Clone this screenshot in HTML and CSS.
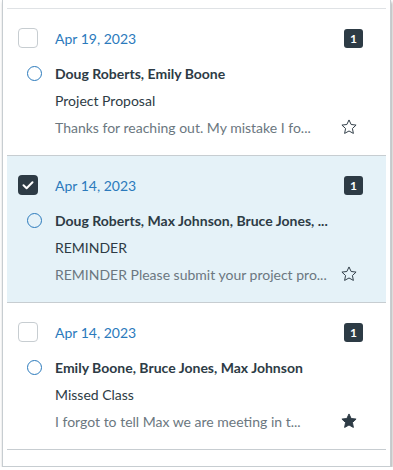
FILE: index.html
```html
<!DOCTYPE html>
<html lang="en">
<head>
    <meta charset="UTF-8">
    <meta name="viewport" content="width=device-width, initial-scale=1.0">
    <title>Inbox</title>
    <link rel="stylesheet" href="styles.css">
</head>
<body>
    <div class="frame">
        <ul class="conversations">
            <li class="conversation">
                <div class="row">
                    <span class="lead"><span class="checkbox"></span></span>
                    <span class="date">Apr 19, 2023</span>
                    <span class="badge">1</span>
                </div>
                <div class="row names-row">
                    <span class="lead"><span class="unread"></span></span>
                    <span class="names">Doug Roberts, Emily Boone</span>
                </div>
                <div class="row">
                    <span class="lead"></span>
                    <span class="subject">Project Proposal</span>
                </div>
                <div class="row">
                    <span class="lead"></span>
                    <span class="preview">Thanks for reaching out. My mistake I fo...</span>
                    <svg class="star" viewBox="0 0 24 24"><path d="M12 2.6l2.85 6.05 6.6.8-4.88 4.55 1.27 6.55L12 17.3l-5.84 3.25 1.27-6.55L2.55 9.45l6.6-.8z"/></svg>
                </div>
            </li>
            <li class="conversation selected">
                <div class="row">
                    <span class="lead">
                        <span class="checkbox checked">
                            <svg viewBox="0 0 20 20"><polyline points="5.5,10.3 8.6,13.2 14.5,7.2"/></svg>
                        </span>
                    </span>
                    <span class="date">Apr 14, 2023</span>
                    <span class="badge">1</span>
                </div>
                <div class="row names-row">
                    <span class="lead"><span class="unread"></span></span>
                    <span class="names">Doug Roberts, Max Johnson, Bruce Jones, ...</span>
                </div>
                <div class="row">
                    <span class="lead"></span>
                    <span class="subject">REMINDER</span>
                </div>
                <div class="row">
                    <span class="lead"></span>
                    <span class="preview">REMINDER Please submit your project pro...</span>
                    <svg class="star" viewBox="0 0 24 24"><path d="M12 2.6l2.85 6.05 6.6.8-4.88 4.55 1.27 6.55L12 17.3l-5.84 3.25 1.27-6.55L2.55 9.45l6.6-.8z"/></svg>
                </div>
            </li>
            <li class="conversation">
                <div class="row">
                    <span class="lead"><span class="checkbox"></span></span>
                    <span class="date">Apr 14, 2023</span>
                    <span class="badge">1</span>
                </div>
                <div class="row names-row">
                    <span class="lead"><span class="unread"></span></span>
                    <span class="names">Emily Boone, Bruce Jones, Max Johnson</span>
                </div>
                <div class="row">
                    <span class="lead"></span>
                    <span class="subject">Missed Class</span>
                </div>
                <div class="row">
                    <span class="lead"></span>
                    <span class="preview">I forgot to tell Max we are meeting in t...</span>
                    <svg class="star starred" viewBox="0 0 24 24"><path d="M12 2.6l2.85 6.05 6.6.8-4.88 4.55 1.27 6.55L12 17.3l-5.84 3.25 1.27-6.55L2.55 9.45l6.6-.8z"/></svg>
                </div>
            </li>
        </ul>
    </div>
</body>
</html>
```

FILE: styles.css
```css
body {
    margin: 0;
    font-family: Lato, 'Noto Sans', sans-serif;
    background-color: #fff;
    color: #2d3b45;
}
.frame {
    margin-left: 2px;
    width: 379px;
    padding: 8px 4px 16px 4px;
    border: 1px solid #c7cdd1;
    border-top: none;
    box-shadow: 1px 2px 3px rgba(0, 0, 0, 0.35);
}
.conversations {
    list-style: none;
    margin: 0;
    padding: 0;
    border-top: 1px solid #dfe2e5;
}
.conversation {
    height: 147px;
    box-sizing: border-box;
    padding: 19px 23px 0 11px;
    border-bottom: 1px solid #c7cdd1;
}
.conversation.selected {
    background-color: #e5f2f8;
}
.row {
    display: flex;
    align-items: center;
    height: 20px;
    margin-top: 7px;
}
.row:first-child {
    margin-top: 0;
}
.names-row {
    margin-top: 15px;
}
.lead {
    width: 37px;
    flex-shrink: 0;
    display: flex;
    align-items: center;
}
.checkbox {
    width: 18px;
    height: 18px;
    border: 1px solid #c7cdd1;
    border-radius: 4px;
    background-color: #fff;
    display: flex;
}
.checkbox.checked {
    width: 20px;
    height: 20px;
    border: none;
    background-color: #2d3b45;
}
.checkbox svg {
    width: 20px;
    height: 20px;
    fill: none;
    stroke: #fff;
    stroke-width: 2;
    stroke-linecap: round;
    stroke-linejoin: round;
}
.unread {
    width: 13px;
    height: 13px;
    margin-left: 8.5px;
    border: 1.5px solid #2b7abc;
    border-radius: 50%;
}
.date {
    flex: 1;
    font-size: 14px;
    color: #2b7abc;
}
.badge {
    width: 19px;
    height: 19px;
    border-radius: 3px;
    background-color: #2d3b45;
    color: #fff;
    font-size: 12px;
    font-weight: bold;
    display: flex;
    align-items: center;
    justify-content: center;
}
.names {
    font-size: 14px;
    font-weight: bold;
    white-space: nowrap;
}
.subject {
    font-size: 14px;
    white-space: nowrap;
}
.preview {
    flex: 1;
    font-size: 14px;
    color: #6b7780;
    white-space: nowrap;
}
.star {
    width: 18px;
    height: 18px;
    margin-right: 5px;
    fill: none;
    stroke: #2d3b45;
    stroke-width: 1.3;
    stroke-linejoin: round;
}
.star.starred {
    fill: #2d3b45;
}
```
